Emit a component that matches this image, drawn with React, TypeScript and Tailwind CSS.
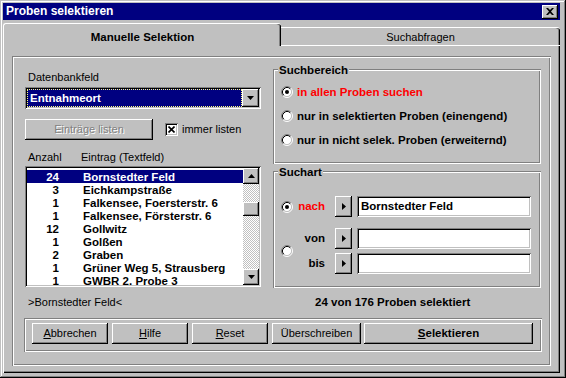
import React from "react";

const RAISED =
  "shadow-[inset_-1px_-1px_0_#000,inset_1px_1px_0_#fff,inset_-2px_-2px_0_#808080]";
const SUNKEN =
  "shadow-[inset_1px_1px_0_#808080,inset_-1px_-1px_0_#fff,inset_2px_2px_0_#000,inset_-2px_-2px_0_#c0c0c0]";
const ETCHED =
  "shadow-[inset_1px_1px_0_#808080,inset_-1px_-1px_0_#fff,inset_2px_2px_0_#fff,inset_-2px_-2px_0_#808080]";

function Radio({ checked }: { checked?: boolean }) {
  return (
    <svg width="12" height="12" viewBox="0 0 12 12" className="shrink-0">
      <circle cx="6" cy="6" r="4.5" fill="#fff" />
      <path d="M2.11 9.89 A5.5 5.5 0 0 1 9.89 2.11" fill="none" stroke="#808080" strokeWidth="1" />
      <path d="M9.89 2.11 A5.5 5.5 0 0 1 2.11 9.89" fill="none" stroke="#fff" strokeWidth="1" />
      <path d="M2.82 9.18 A4.5 4.5 0 0 1 9.18 2.82" fill="none" stroke="#000" strokeWidth="1" />
      <path d="M9.18 2.82 A4.5 4.5 0 0 1 2.82 9.18" fill="none" stroke="#c0c0c0" strokeWidth="1" />
      {checked && <circle cx="6" cy="6" r="2" fill="#000" />}
    </svg>
  );
}

function ArrowBtn() {
  return (
    <div className={`w-[17px] h-[21px] bg-[#c0c0c0] flex items-center justify-center shrink-0 ${RAISED}`}>
      <svg width="4" height="7" viewBox="0 0 4 7">
        <path d="M0 0 L4 3.5 L0 7 Z" fill="#000" />
      </svg>
    </div>
  );
}

function TextBox({ value }: { value?: string }) {
  return (
    <div className={`w-[174px] h-[21px] bg-white flex items-center pl-[4px] font-bold text-[11.5px] ${SUNKEN}`}>
      {value}
    </div>
  );
}

function DownTri() {
  return (
    <svg width="7" height="4" viewBox="0 0 7 4">
      <path d="M0 0 L7 0 L3.5 4 Z" fill="#000" />
    </svg>
  );
}

function UpTri() {
  return (
    <svg width="7" height="4" viewBox="0 0 7 4">
      <path d="M0 4 L7 4 L3.5 0 Z" fill="#000" />
    </svg>
  );
}

const rows: [string, string][] = [
  ["24", "Bornstedter Feld"],
  ["3", "Eichkampstraße"],
  ["1", "Falkensee, Foersterstr. 6"],
  ["1", "Falkensee, Försterstr. 6"],
  ["12", "Gollwitz"],
  ["1", "Golßen"],
  ["2", "Graben"],
  ["1", "Grüner Weg 5, Strausberg"],
  ["1", "GWBR 2, Probe 3"],
];

function Btn({ w, children, bold }: { w: string; children: React.ReactNode; bold?: boolean }) {
  return (
    <div
      className={`${w} h-[21px] bg-[#c0c0c0] flex items-center justify-center ${RAISED} ${
        bold ? "font-bold text-[11.5px]" : ""
      }`}
    >
      {children}
    </div>
  );
}

export default function App() {
  return (
    <div
      className={`w-[566px] h-[378px] bg-[#c0c0c0] font-['Liberation_Sans',Arial,sans-serif] text-black text-[11px] leading-[13px] pl-[3px] pt-[3px] pr-[6px] pb-[5px] flex flex-col overflow-hidden shadow-[inset_-1px_-1px_0_#000,inset_1px_1px_0_#c0c0c0,inset_-2px_-2px_0_#808080,inset_2px_2px_0_#fff]`}
    >
      {/* Title bar */}
      <div className="h-[17px] shrink-0 bg-[#000080] flex items-center justify-between pl-[3px] pr-[2px]">
        <span className="text-white font-bold text-[12px]">Proben selektieren</span>
        <div className={`w-[16px] h-[14px] bg-[#c0c0c0] flex items-center justify-center ${RAISED}`}>
          <svg width="8" height="7" viewBox="0 0 8 7">
            <path d="M0 0 L2 0 L4 2 L6 0 L8 0 L5 3.5 L8 7 L6 7 L4 5 L2 7 L0 7 L3 3.5 Z" fill="#000" />
          </svg>
        </div>
      </div>

      {/* Tabs */}
      <div className="h-[26px] shrink-0 flex items-end">
        <div className="w-[278px] h-[23px] bg-[#c0c0c0] border-l border-t border-white rounded-tl-[3px] rounded-tr-[3px] shadow-[inset_-1px_0_0_#000,inset_-2px_0_0_#808080] flex items-center justify-center font-bold text-[11.5px] pt-[4px]">
          Manuelle Selektion
        </div>
        <div className="flex-1 flex flex-col">
          <div className="h-[18px] bg-[#c0c0c0] border-t border-white rounded-tr-[3px] shadow-[inset_-1px_0_0_#000,inset_-2px_0_0_#808080] flex items-center justify-center pt-[2px]">
            Suchabfragen
          </div>
          <div className="h-[1px] bg-white" />
        </div>
      </div>

      {/* Panel */}
      <div className="flex-1 border-l border-white shadow-[inset_-1px_-1px_0_#000,inset_-2px_-2px_0_#808080] pl-[8px] pt-[10px]">
        <div className={`w-[539px] h-[310px] ${ETCHED} flex flex-col pl-[12px]`}>
          <div className="flex items-start">
            {/* Left column */}
            <div className="w-[236px] ml-[1px] flex flex-col pt-[15px]">
              <div className="h-[13px] pl-[3px]">Datenbankfeld</div>
              <div className={`mt-[3px] h-[22px] bg-white p-[2px] flex ${SUNKEN}`}>
                <div className="flex-1 bg-[#000080] border border-dotted border-[#ffff80] flex items-center pl-[2px] text-white font-bold text-[11.5px]">
                  Entnahmeort
                </div>
                <div className={`w-[17px] bg-[#c0c0c0] flex items-center justify-center ${RAISED}`}>
                  <DownTri />
                </div>
              </div>
              <div className="mt-[10px] h-[21px] flex items-center">
                <div className={`w-[128px] h-[21px] flex items-center justify-center text-[#808080] [text-shadow:1px_1px_0_#fff] ${RAISED}`}>
                  Einträge listen
                </div>
                <div className={`ml-[12px] w-[13px] h-[13px] bg-white flex items-center justify-center ${SUNKEN}`}>
                  <svg width="7" height="7" viewBox="0 0 7 7">
                    <path d="M0.5 0.5 L6.5 6.5 M6.5 0.5 L0.5 6.5" stroke="#000" strokeWidth="1.6" />
                  </svg>
                </div>
                <span className="ml-[4px]">immer listen</span>
              </div>
              <div className="mt-[11px] h-[13px] flex">
                <span className="pl-[3px] w-[56px]">Anzahl</span>
                <span>Eintrag (Textfeld)</span>
              </div>
              <div className={`mt-[2px] h-[121px] bg-white p-[2px] flex ${SUNKEN}`}>
                <div className="flex-1 overflow-hidden pt-[2px] font-bold text-[11.5px] leading-[12px]">
                  {rows.map(([n, t], i) => (
                    <div
                      key={i}
                      className={`h-[13px] flex items-center ${i === 0 ? "bg-[#000080] text-white" : ""}`}
                    >
                      <span className="w-[32px] text-right">{n}</span>
                      <span className="ml-[24px] whitespace-nowrap">{t}</span>
                    </div>
                  ))}
                </div>
                <div className="w-[16px] flex flex-col bg-[repeating-conic-gradient(#c0c0c0_0_25%,#fff_0_50%)] bg-[length:2px_2px]">
                  <div className={`h-[16px] bg-[#c0c0c0] flex items-center justify-center ${RAISED}`}>
                    <UpTri />
                  </div>
                  <div className="flex-1 pt-[18px]">
                    <div className={`h-[14px] bg-[#c0c0c0] ${RAISED}`} />
                  </div>
                  <div className={`h-[16px] bg-[#c0c0c0] flex items-center justify-center ${RAISED}`}>
                    <DownTri />
                  </div>
                </div>
              </div>
              <div className="mt-[9px] h-[13px] pl-[3px]">&gt;Bornstedter Feld&lt;</div>
            </div>

            {/* Right column */}
            <div className="w-[268px] ml-[12px] flex flex-col pt-[13px]">
              <div className={`relative h-[95px] ${ETCHED} pt-[15px] pl-[8px] flex flex-col gap-[8px] font-bold text-[11.5px]`}>
                <span className="absolute left-[5px] top-[-5px] h-[13px] px-[1px] bg-[#c0c0c0]">Suchbereich</span>
                <div className="h-[16px] flex items-center">
                  <Radio checked />
                  <span className="ml-[4px] text-[#ff0000]">in allen Proben suchen</span>
                </div>
                <div className="h-[16px] flex items-center">
                  <Radio />
                  <span className="ml-[4px]">nur in selektierten Proben (einengend)</span>
                </div>
                <div className="h-[16px] flex items-center">
                  <Radio />
                  <span className="ml-[4px]">nur in nicht selek. Proben (erweiternd)</span>
                </div>
              </div>

              <div className={`relative mt-[7px] h-[117px] ${ETCHED} pt-[25px] pl-[8px] flex flex-col font-bold text-[11.5px]`}>
                <span className="absolute left-[5px] top-[-5px] h-[13px] px-[1px] bg-[#c0c0c0]">Suchart</span>
                <div className="h-[21px] flex items-center">
                  <Radio checked />
                  <span className="ml-[4px] w-[28px] text-right text-[#ff0000]">nach</span>
                  <div className="ml-[10px]">
                    <ArrowBtn />
                  </div>
                  <div className="ml-[5px]">
                    <TextBox value="Bornstedter Feld" />
                  </div>
                </div>
                <div className="mt-[11px] flex items-center">
                  <Radio />
                  <div className="flex flex-col gap-[4px]">
                    <div className="h-[21px] flex items-center">
                      <span className="ml-[4px] w-[28px] text-right">von</span>
                      <div className="ml-[10px]">
                        <ArrowBtn />
                      </div>
                      <div className="ml-[5px]">
                        <TextBox />
                      </div>
                    </div>
                    <div className="h-[21px] flex items-center">
                      <span className="ml-[4px] w-[28px] text-right">bis</span>
                      <div className="ml-[10px]">
                        <ArrowBtn />
                      </div>
                      <div className="ml-[5px]">
                        <TextBox />
                      </div>
                    </div>
                  </div>
                </div>
              </div>

              <div className="mt-[8px] h-[13px] pl-[42px] font-bold text-[11.5px] whitespace-nowrap">
                24 von 176 Proben selektiert
              </div>
            </div>
          </div>

          {/* Buttons */}
          <div className={`mt-[9px] w-[518px] h-[34px] ${ETCHED} pl-[8px] pt-[5px] flex gap-[4px]`}>
            <Btn w="w-[76px]">
              <span><u>A</u>bbrechen</span>
            </Btn>
            <Btn w="w-[76px]">
              <span><u>H</u>ilfe</span>
            </Btn>
            <Btn w="w-[76px]">
              <span><u>R</u>eset</span>
            </Btn>
            <Btn w="w-[89px]">
              <span>Überschreiben</span>
            </Btn>
            <div className="-ml-[1px]">
              <Btn w="w-[169px]" bold>
                <span><u>S</u>elektieren</span>
              </Btn>
            </div>
          </div>
        </div>
      </div>
    </div>
  );
}
